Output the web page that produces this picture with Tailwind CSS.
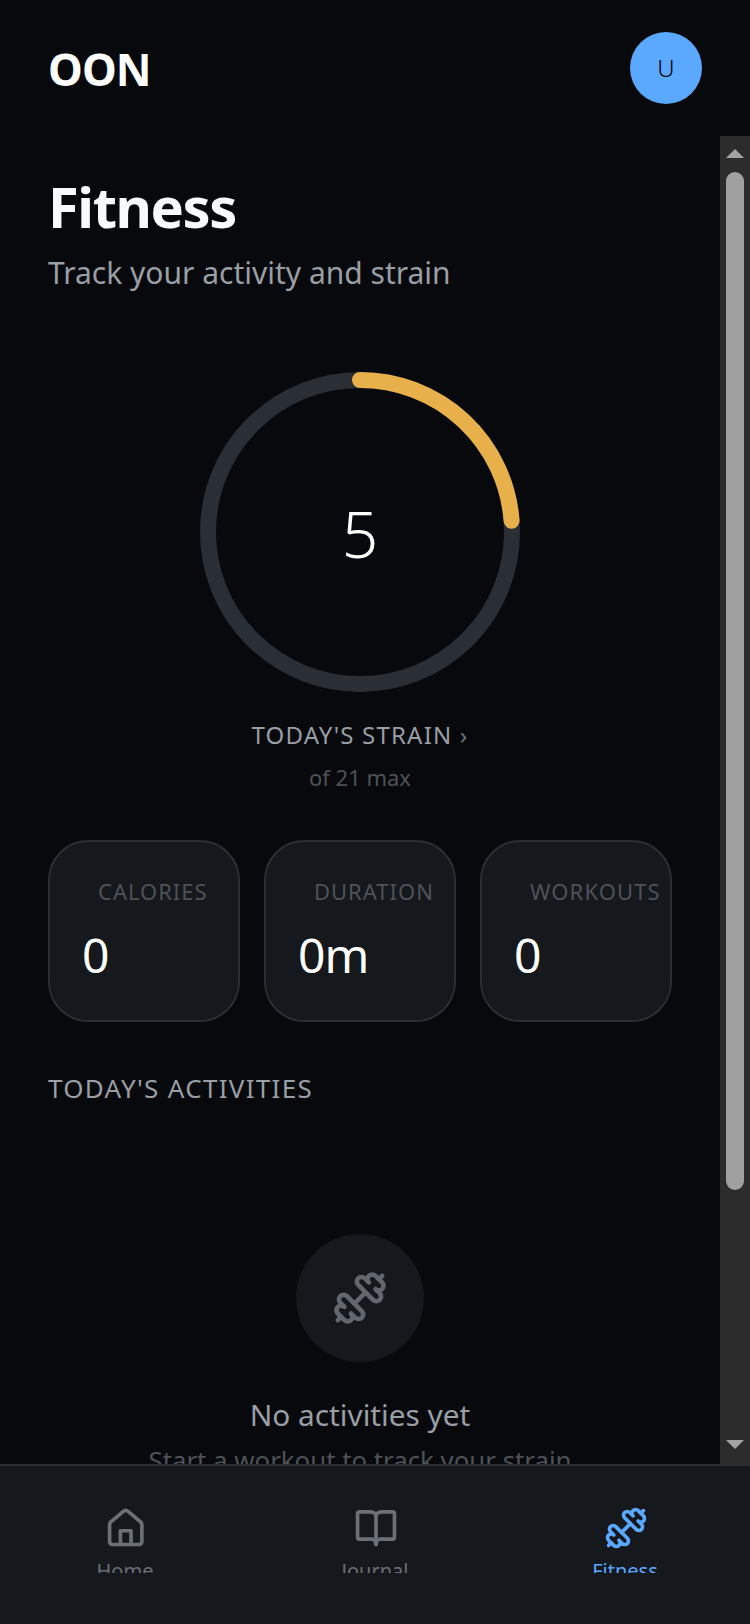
<!DOCTYPE html>
<html lang="en">
<head>
  <meta charset="UTF-8" />
  <meta name="viewport" content="width=device-width, initial-scale=1.0"/>
  <title>Fitness | OON</title>
  <script src="https://cdn.jsdelivr.net/npm/@tailwindcss/browser@4"></script>
</head>
<body class="bg-[#07090c] font-['Noto_Sans',sans-serif]">
  <div class="w-[750px] h-[1624px] flex flex-col overflow-hidden">
    <!-- header -->
    <header class="h-[136px] shrink-0 flex items-start justify-between pl-[48px] pr-[48px] pt-[32px]">
      <span class="mt-[5px] text-[44px] leading-[64px] font-bold tracking-[-0.02em] text-white">OON</span>
      <div class="w-[72px] h-[72px] rounded-full bg-[#5aa9ff] flex items-center justify-center text-[24px] font-light text-black">U</div>
    </header>

    <div class="h-[1328px] shrink-0 flex">
      <main class="w-[720px] overflow-hidden px-[48px] pt-[38px]">
        <h1 class="text-[56px] leading-[64px] font-bold tracking-[-0.025em] text-[#f8f9fa]">Fitness</h1>
        <p class="mt-[15px] text-[30px] leading-[40px] text-[#9a9ea5]">Track your activity and strain</p>

        <!-- strain ring -->
        <div class="mt-[79px] flex flex-col items-center">
          <div class="relative w-[320px] h-[320px]">
            <svg class="w-[320px] h-[320px] -rotate-90" viewBox="0 0 320 320" fill="none">
              <circle cx="160" cy="160" r="152" stroke="#2a2e35" stroke-width="16"/>
              <circle cx="160" cy="160" r="152" stroke="#e8b04b" stroke-width="16" stroke-linecap="round" stroke-dasharray="227.4 955"/>
            </svg>
            <div class="absolute inset-0 pt-[4px] flex items-center justify-center text-[64px] font-light text-white">5</div>
          </div>
          <p class="mt-[27px] text-[24px] leading-[32px] tracking-[0.05em] text-[#9a9ea5]">TODAY'S STRAIN <span class="text-[#6b6f76]">›</span></p>
          <p class="mt-[10px] text-[22px] leading-[32px] text-[#4e5258]">of 21 max</p>
        </div>

        <!-- stat cards -->
        <div class="mt-[47px] grid grid-cols-3 gap-[24px]">
          <div class="h-[182px] rounded-[40px] border-2 border-[#2a2d32] bg-[#15181c] pt-[33px] pl-[32px] whitespace-nowrap">
            <p class="pl-[16px] text-[22px] leading-[32px] tracking-[0.045em] text-[#4e5258]">CALORIES</p>
            <p class="mt-[16px] text-[48px] leading-[64px] tracking-[-0.02em] text-white">0</p>
          </div>
          <div class="h-[182px] rounded-[40px] border-2 border-[#2a2d32] bg-[#15181c] pt-[33px] pl-[32px] whitespace-nowrap">
            <p class="pl-[16px] text-[22px] leading-[32px] tracking-[0.045em] text-[#4e5258]">DURATION</p>
            <p class="mt-[16px] text-[48px] leading-[64px] tracking-[-0.02em] text-white">0m</p>
          </div>
          <div class="h-[182px] rounded-[40px] border-2 border-[#2a2d32] bg-[#15181c] pt-[33px] pl-[32px] whitespace-nowrap">
            <p class="pl-[16px] text-[22px] leading-[32px] tracking-[0.05em] text-[#4e5258]">WORKOUTS</p>
            <p class="mt-[16px] text-[48px] leading-[64px] tracking-[-0.02em] text-white">0</p>
          </div>
        </div>

        <h2 class="mt-[50px] text-[26px] leading-[32px] font-normal tracking-[0.05em] text-[#9a9ea5]">TODAY'S ACTIVITIES</h2>

        <!-- empty state -->
        <div class="mt-[130px] flex flex-col items-center">
          <div class="w-[128px] h-[128px] rounded-full bg-[#15181c] flex items-center justify-center">
            <svg class="w-[56px] h-[56px] text-[#62666d] -scale-x-100" viewBox="0 0 24 24" fill="none" stroke="currentColor" stroke-width="2" stroke-linecap="round" stroke-linejoin="round">
              <path d="M14.4 14.4 9.6 9.6"/>
              <path d="M18.657 21.485a2 2 0 1 1-2.829-2.828l-1.767 1.768a2 2 0 1 1-2.829-2.829l6.364-6.364a2 2 0 1 1 2.829 2.829l-1.768 1.767a2 2 0 1 1 2.828 2.829z"/>
              <path d="m21.5 21.5-1.4-1.4"/>
              <path d="M3.9 3.9 2.5 2.5"/>
              <path d="M6.404 12.768a2 2 0 1 1-2.829-2.829l1.768-1.767a2 2 0 1 1-2.828-2.829l2.828-2.828a2 2 0 1 1 2.829 2.828l1.767-1.768a2 2 0 1 1 2.829 2.829z"/>
            </svg>
          </div>
          <p class="mt-[33px] text-[29.8px] leading-[40px] text-[#9a9ea5]">No activities yet</p>
          <p class="mt-[9px] text-[25.8px] leading-[32px] text-[#4e5258]">Start a workout to track your strain</p>
        </div>
      </main>

      <!-- scrollbar -->
      <div class="w-[30px] bg-[#2c2c2c] flex flex-col items-center">
        <div class="mt-[13px] w-0 h-0 border-x-[9px] border-x-transparent border-b-[9px] border-b-[#a3a3a3]"></div>
        <div class="mt-[14px] w-[18px] h-[1018px] rounded-full bg-[#a0a0a0]"></div>
        <div class="mt-[250px] w-0 h-0 border-x-[9px] border-x-transparent border-t-[9px] border-t-[#a3a3a3]"></div>
      </div>
    </div>

    <!-- bottom nav -->
    <nav class="h-[160px] shrink-0 border-t-2 border-[#2a2d32] bg-[#15181c] flex pt-[40px]">
      <a class="w-[250px] h-[67px] overflow-hidden flex flex-col items-center text-[#6b6f76]">
        <svg class="w-[44px] h-[44px] shrink-0" viewBox="0 0 24 24" fill="none" stroke="currentColor" stroke-width="2" stroke-linecap="round" stroke-linejoin="round">
          <path d="M9.5 21v-7.5h5.8V21"/>
          <path d="M3.6 10.2a2 2 0 0 1 .7-1.5l6.8-5.8a2 2 0 0 1 2.6 0l6.8 5.8a2 2 0 0 1 .7 1.5V19.5a1.5 1.5 0 0 1-1.5 1.5H5.1a1.5 1.5 0 0 1-1.5-1.5z"/>
        </svg>
        <span class="mt-[7px] text-[20px] leading-[28px]">Home</span>
      </a>
      <a class="w-[250px] h-[67px] overflow-hidden flex flex-col items-center text-[#6b6f76]">
        <svg class="w-[44px] h-[44px] shrink-0" viewBox="0 0 24 24" fill="none" stroke="currentColor" stroke-width="2" stroke-linecap="round" stroke-linejoin="round">
          <path d="M12.55 5.2V21"/>
          <path d="M3.5 3.2H9a3.5 2 0 0 1 3.55 2 3.5 2 0 0 1 3.55-2h5.5a1 1 0 0 1 1 1v12.9a1 1 0 0 1-1 1h-7.2q-1.35 0-1.85 2.9q-.5-2.9-1.85-2.9H3.5a1 1 0 0 1-1-1V4.2a1 1 0 0 1 1-1z"/>
        </svg>
        <span class="mt-[7px] text-[20px] leading-[28px]">Journal</span>
      </a>
      <a class="w-[250px] h-[67px] overflow-hidden flex flex-col items-center text-[#5aa9ff]">
        <svg class="ml-[2px] w-[44px] h-[44px] shrink-0 -scale-x-100" viewBox="0 0 24 24" fill="none" stroke="currentColor" stroke-width="2" stroke-linecap="round" stroke-linejoin="round">
          <path d="M14.4 14.4 9.6 9.6"/>
          <path d="M18.657 21.485a2 2 0 1 1-2.829-2.828l-1.767 1.768a2 2 0 1 1-2.829-2.829l6.364-6.364a2 2 0 1 1 2.829 2.829l-1.768 1.767a2 2 0 1 1 2.828 2.829z"/>
          <path d="m21.5 21.5-1.4-1.4"/>
          <path d="M3.9 3.9 2.5 2.5"/>
          <path d="M6.404 12.768a2 2 0 1 1-2.829-2.829l1.768-1.767a2 2 0 1 1-2.828-2.829l2.828-2.828a2 2 0 1 1 2.829 2.828l1.767-1.768a2 2 0 1 1 2.829 2.829z"/>
        </svg>
        <span class="mt-[7px] text-[20px] leading-[28px]">Fitness</span>
      </a>
    </nav>
  </div>
</body>
</html>
